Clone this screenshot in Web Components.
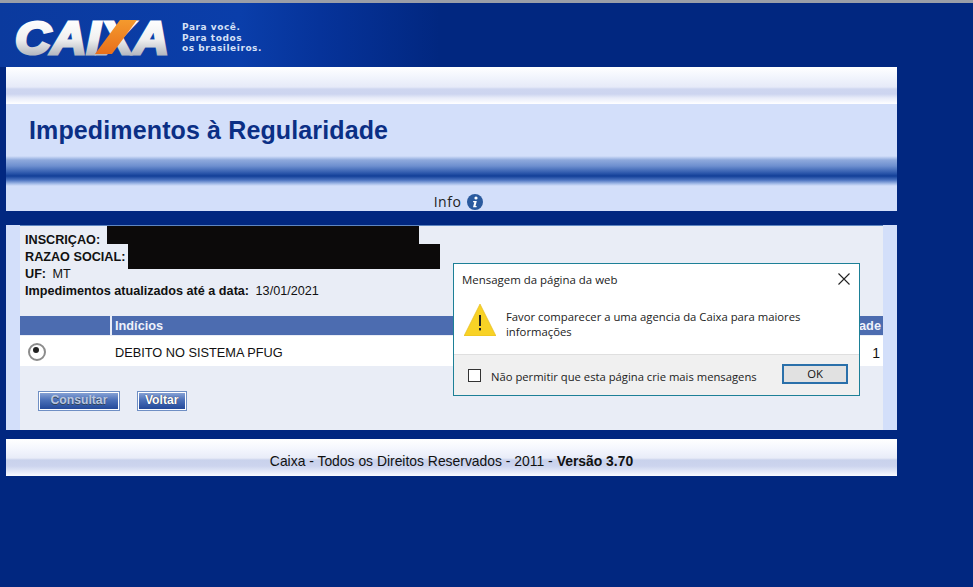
<!DOCTYPE html>
<html lang="pt-BR">
<head>
<meta charset="UTF-8">
<title>Impedimentos à Regularidade</title>
<style>
html,body{margin:0;height:100%;background:#012780;overflow:hidden}
body{font-family:"Liberation Sans",Arial,sans-serif;color:#111}
</style>
</head>
<body>
<template id="t-header">
  <style>
    :host{display:flex;height:64px;border-top:3px solid #9a9ea8;align-items:flex-start;box-sizing:content-box;
      background:linear-gradient(90deg,#0b3a9e 0,#0a3eaa 240px,#06339a 320px,#012780 440px)}
    svg{display:block;margin:9px 0 0 12px;flex:none}
    .slogan{color:#d5e0f6;font:700 9px/10.5px "DejaVu Sans",sans-serif;letter-spacing:.55px;margin:19px 0 0 10px}
  </style>
  <svg width="160" height="54" viewBox="0 0 160 54">
    <defs><linearGradient id="lg" gradientUnits="userSpaceOnUse" x1="0" y1="8" x2="0" y2="43">
      <stop offset="0" stop-color="#fff"/><stop offset=".55" stop-color="#f0f0f0"/><stop offset="1" stop-color="#b4b8c0"/>
    </linearGradient>
    <linearGradient id="og" gradientUnits="userSpaceOnUse" x1="0" y1="8" x2="0" y2="42">
      <stop offset="0" stop-color="#f49a2e"/><stop offset="1" stop-color="#e96f1a"/>
    </linearGradient></defs>
    <text x="3" y="41.5" font-family="Liberation Sans" font-weight="700" font-style="italic" font-size="46" textLength="154" lengthAdjust="spacingAndGlyphs" fill="url(#lg)" stroke="url(#lg)" stroke-width="3">CAIXA</text>
    <polygon points="83,42 100,42 125,8 108,8" fill="url(#og)"/>
  </svg>
  <div class="slogan">Para você.<br>Para todos<br>os brasileiros.</div>
</template>

<template id="t-band">
  <style>
    :host{display:block;height:37px;
      background:linear-gradient(180deg,#fff 0,#f3f6fd 9px,#e6eaf8 20px,#ced6f0 22px,#cdd5f0 27px,#e8ecf9 31px,#fbfcff 36px,#fff 37px)}
  </style>
</template>

<template id="t-title">
  <style>
    :host{display:flex;align-items:center;height:52px;padding:1px 0 0 23px;box-sizing:border-box;background:#d3dffa;
      color:#0b2f85;font:700 25px "Liberation Sans",sans-serif;letter-spacing:.13px}
  </style>
  <slot></slot>
</template>

<template id="t-stripe">
  <style>
    :host{display:block;height:30px;
      background:linear-gradient(180deg,#d3dffa 0,#8ea9dc 4px,#6d8fcf 10px,#2d58ac 17px,#123f98 20px,#4a72bf 24px,#a9c0ea 28px,#d3dffa 30px)}
  </style>
</template>

<template id="t-info">
  <style>
    :host{display:flex;align-items:center;justify-content:center;gap:6px;height:25px;box-sizing:border-box;background:#d3dffa;
      color:#222;font:14px "Open Sans",sans-serif;letter-spacing:.5px;padding:6px 0 0 14px}
    svg{display:block}
  </style>
  <slot></slot>
  <svg width="16" height="16" viewBox="0 0 16 16">
    <circle cx="8" cy="8" r="8" fill="#2a5a9e"/>
    <circle cx="9" cy="4" r="1.6" fill="#fff"/>
    <path d="M6.2 7h3.6l-1.3 5h1.2l-.2 1.2H6l1.3-5H6z" fill="#fff"/>
  </svg>
</template>

<template id="t-panel">
  <style>
    :host{display:block;background:#d3dffa;padding:0 14px;height:205px;box-sizing:border-box;margin-top:14px}
    .inner{height:100%;background:#e9edf6;border-top:1px solid #5f86c0;box-sizing:border-box;position:relative}
  </style>
  <div class="inner"><slot></slot></div>
</template>

<template id="t-details">
  <style>
    :host{display:block;padding:6px 5px 0;font:700 12.65px/17px "Liberation Sans",sans-serif;height:84px;box-sizing:border-box;color:#111;position:relative}
    .val{font-weight:400;margin-left:3px}
    .black{position:absolute;background:#0c0a0a}
    .b1{left:87px;top:0;width:312px;height:18px}
    .b2{left:108px;top:18px;width:312px;height:25px}
  </style>
  <div>INSCRIÇAO:</div>
  <div>RAZAO SOCIAL:</div>
  <div>UF: <span class="val">MT</span></div>
  <div><slot name="label"></slot> <span class="val"><slot name="date"></slot></span></div>
  <div class="black b1"></div>
  <div class="black b2"></div>
</template>

<template id="t-table">
  <style>
    :host{display:block;font:12.75px "Liberation Sans",sans-serif}
    .head{display:grid;grid-template-columns:90px 1fr auto;height:19px;background:#4c6cb0;color:#eef2fb;font-weight:700;line-height:19px}
    .head div:nth-child(2){border-left:2px solid #e8edf8;padding-left:3px}
    .head div:last-child{padding-right:2px}
    .row{display:grid;grid-template-columns:90px 1fr auto;height:30px;background:#fff;align-items:center;margin-top:1px}
    .row div:nth-child(2){padding:3px 0 0 5px;color:#111}
    .row div:last-child{padding:3px 3px 0 0;font-size:14px}
    .radio{width:11px;height:11px;border:2px solid #8c8c8c;border-radius:50%;margin:1px 0 0 8px;position:relative;background:#fff}
    .radio::after{content:"";position:absolute;left:2.5px;top:2.5px;width:6px;height:6px;border-radius:50%;background:#222}
  </style>
  <div class="head"><div></div><div>Indícios</div><div>Quantidade</div></div>
  <div class="row"><div><div class="radio"></div></div><div>DEBITO NO SISTEMA PFUG</div><div>1</div></div>
</template>

<template id="t-button">
  <style>
    :host{display:inline-block;height:20px;box-sizing:border-box;border:1px solid #6f8fc4;outline:1px solid #fff;outline-offset:-2px;
      background:linear-gradient(180deg,#8ea8d8 0,#4a6fb8 45%,#1f4596 100%);
      color:#fff;font:700 12.2px/17px "Liberation Sans",sans-serif;text-align:center;padding:0 7px;text-shadow:0 0 1px #223}
    :host([disabled]){color:#b9c6de;padding:0 11.5px;text-shadow:0 1px 0 #345}
  </style>
  <slot></slot>
</template>

<template id="t-actions">
  <style>
    :host{display:flex;gap:17px;padding:25px 0 0 18px}
  </style>
  <slot></slot>
</template>

<template id="t-footer">
  <style>
    :host{display:flex;align-items:center;justify-content:center;height:37px;margin-top:9px;padding-top:7px;box-sizing:border-box;
      background:linear-gradient(180deg,#fff 0,#f5f7fe 9px,#e8ecf8 19px,#c9d2ec 21px,#ccd4ee 27px,#e6eaf8 33px,#fafbff 37px);
      font:13.9px "Liberation Sans",sans-serif;color:#111}
    ::slotted(b){margin-left:4px}
  </style>
  <slot></slot>
</template>

<template id="t-dialog">
  <style>
    :host{position:absolute;left:453px;top:263px;width:407px;height:133px;box-sizing:border-box;border:1px solid #1d8097;background:#fff;
      font:11.3px "Open Sans",sans-serif;color:#222;display:flex;flex-direction:column}
    .title{display:flex;justify-content:space-between;align-items:center;height:30px;padding:0 9px 0 8px;flex:none;font-size:11.45px}
    .close{display:block}
    .body{display:flex;flex:1;gap:10px;padding:10px 8px 0 10px;line-height:15px}
    .msg{padding-top:5px;width:340px}
    .foot{display:flex;align-items:center;height:41px;flex:none;background:#f0f0f0;border-top:1px solid #dfdfdf;padding:0 11px 0 13px;box-sizing:border-box}
    .check{width:11px;height:11px;border:1px solid #333;background:#fff;flex:none;margin:1px 10px 0 1px}
    .ok{margin:-2px 0 0 auto;width:66px;height:20px;box-sizing:border-box;border:2px solid #2a70aa;background:#e1e1e1;text-align:center;line-height:15px;color:#111}
    .lbl{margin-top:3px;font-size:11.26px}
  </style>
  <div class="title"><span>Mensagem da página da web</span>
    <svg class="close" width="12" height="12" viewBox="0 0 12 12"><path d="M.5.5l11 11M11.5.5l-11 11" stroke="#222" stroke-width="1.1" fill="none"/></svg>
  </div>
  <div class="body">
    <svg width="32" height="32" viewBox="0 0 32 32" style="flex:none">
      <path d="M16 0L32 32H0z" fill="#f8d226" stroke="#e2b71a" stroke-width=".6"/>
      <rect x="15" y="11" width="2" height="11" fill="#222"/>
      <rect x="15" y="24" width="2" height="2.4" fill="#222"/>
    </svg>
    <div class="msg"><slot></slot></div>
  </div>
  <div class="foot">
    <span class="check"></span>
    <span class="lbl"><slot name="check"></slot></span>
    <span class="ok">OK</span>
  </div>
</template>

<template id="t-page">
  <style>
    :host{display:block;position:relative;height:587px;background:#012780}
    .col{width:891px;margin-left:6px}
  </style>
  <slot name="top"></slot>
  <div class="col"><slot></slot></div>
  <slot name="over"></slot>
</template>

<script>
// every tag here just stamps its template into an open shadow root
const tags = {
  "caixa-page": "t-page",
  "caixa-header": "t-header",
  "caixa-band": "t-band",
  "caixa-title": "t-title",
  "caixa-stripe": "t-stripe",
  "caixa-info": "t-info",
  "caixa-panel": "t-panel",
  "caixa-details": "t-details",
  "caixa-table": "t-table",
  "caixa-button": "t-button",
  "caixa-actions": "t-actions",
  "caixa-footer": "t-footer",
  "caixa-dialog": "t-dialog"
}
for (const [tag, id] of Object.entries(tags)) {
  customElements.define(tag, class extends HTMLElement {
    connectedCallback() {
      if (this.shadowRoot) return
      const root = this.attachShadow({mode: "open"})
      root.appendChild(document.getElementById(id).content.cloneNode(true))
    }
  })
}
</script>

<caixa-page>
  <caixa-header slot="top"></caixa-header>
  <caixa-band></caixa-band>
  <caixa-title>Impedimentos à Regularidade</caixa-title>
  <caixa-stripe></caixa-stripe>
  <caixa-info>Info</caixa-info>
  <caixa-panel>
    <caixa-details>
      <span slot="label">Impedimentos atualizados até a data:</span>
      <span slot="date">13/01/2021</span>
    </caixa-details>
    <caixa-table style="margin-top:6px"></caixa-table>
    <caixa-actions>
      <caixa-button disabled>Consultar</caixa-button>
      <caixa-button>Voltar</caixa-button>
    </caixa-actions>
  </caixa-panel>
  <caixa-footer>Caixa - Todos os Direitos Reservados - 2011 - <b>Versão 3.70</b></caixa-footer>
  <caixa-dialog slot="over">
    Favor comparecer a uma agencia da Caixa para maiores informações
    <span slot="check">Não permitir que esta página crie mais mensagens</span>
  </caixa-dialog>
</caixa-page>
</body>
</html>
